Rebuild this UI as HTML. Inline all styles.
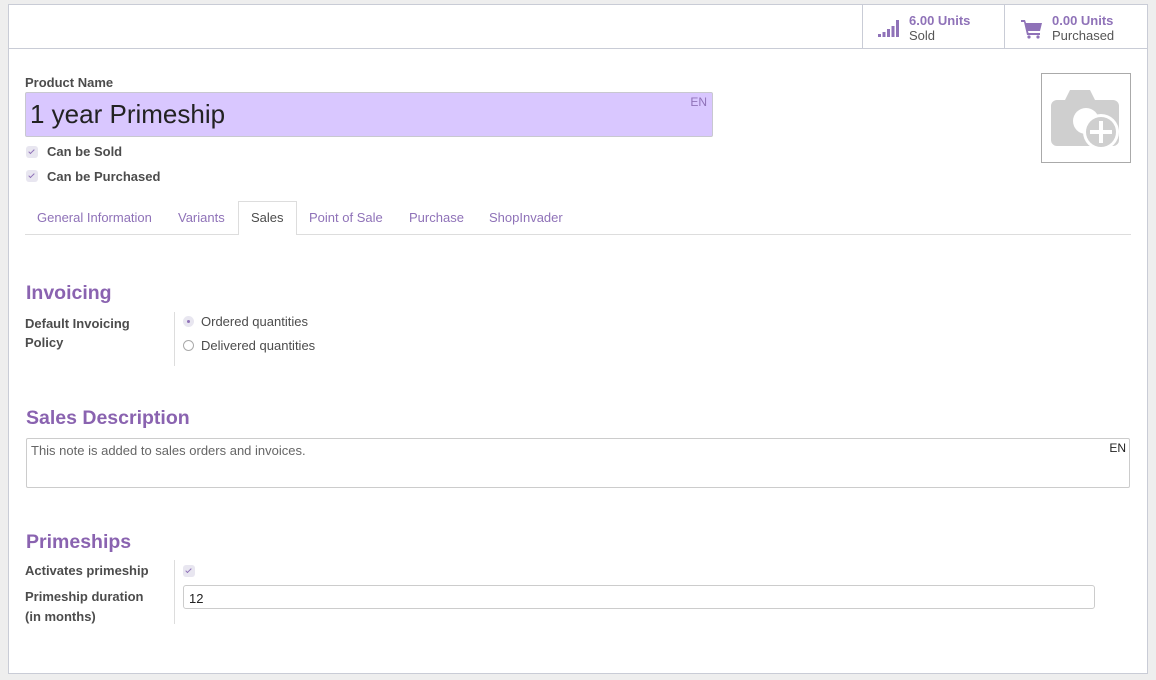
<!DOCTYPE html>
<html><head><style>
*{box-sizing:border-box;margin:0;padding:0}
body{width:1156px;height:680px;background:#eeeeee;font-family:"Liberation Sans",sans-serif;font-size:13px;color:#4c4c4c;position:relative;overflow:hidden}
.sheet{position:absolute;left:8px;top:4px;width:1140px;height:670px;background:#fff;border:1px solid #c9ccd6}
.abs{position:absolute}
.c{position:absolute;left:0;top:-1px;width:1138px;height:668px}
.bar{position:absolute;left:0;top:0;width:1138px;height:44px;border-bottom:1px solid #c9ccd6}
.btn{position:absolute;top:0;height:43px;border-left:1px solid #c9ccd6}
.purple{color:#8f72b8}
.lbl{font-weight:bold;color:#4c4c4c}
.chk{position:absolute;width:12px;height:12px;background:#e8e6f0;border-radius:3px}
.chk:after{content:"";position:absolute;left:4px;top:2px;width:2px;height:5px;border:solid #8f72b8;border-width:0 1.3px 1.3px 0;transform:rotate(45deg)}
.tab{position:absolute;color:#8f72b8;font-size:13px}
h2{position:absolute;font-size:19.5px;color:#8a63b0;font-weight:bold}
.vl{position:absolute;width:1px;background:#ddd}
</style></head><body>
<div class="sheet">
 <div class="bar">
  <div class="btn" style="left:853px;width:142px">
   <svg class="abs" style="left:15px;top:15px" width="22" height="18" viewBox="0 0 22 18"><rect x="0" y="14" width="3" height="3" fill="#8f72b8"/><rect x="4.5" y="12" width="3" height="5" fill="#8f72b8"/><rect x="9" y="9" width="3" height="8" fill="#8f72b8"/><rect x="13.5" y="6" width="3" height="11" fill="#8f72b8"/><rect x="18" y="0" width="3" height="17" fill="#8f72b8"/></svg>
   <div class="abs purple" style="left:46px;top:8px;font-weight:bold">6.00 Units</div>
   <div class="abs" style="left:46px;top:23px;color:#555">Sold</div>
  </div>
  <div class="btn" style="left:995px;width:143px">
   <svg class="abs" style="left:16px;top:14px" width="22" height="20" viewBox="0 0 22 20"><path d="M0 1h4l1 3h16l-2 8H7l.5 2H19v2H6L3 3H0z" fill="#8f72b8"/><circle cx="8" cy="18" r="1.6" fill="#8f72b8"/><circle cx="17" cy="18" r="1.6" fill="#8f72b8"/></svg>
   <div class="abs purple" style="left:47px;top:8px;font-weight:bold">0.00 Units</div>
   <div class="abs" style="left:47px;top:23px;color:#555">Purchased</div>
  </div>
 </div>
 <div class="c">
 <div class="abs lbl" style="left:16px;top:71px">Product Name</div>
 <div class="abs" style="left:16px;top:88px;width:688px;height:45px;background:#d9c7ff;border:1px solid #c8c8d0;border-radius:2px">
  <div class="abs" style="left:4px;top:6px;font-size:26px;color:#222">1 year Primeship</div>
  <div class="abs purple" style="right:5px;top:2px;font-size:12px">EN</div>
 </div>
 <div class="chk" style="left:17px;top:142px"></div>
 <div class="abs lbl" style="left:38px;top:140px">Can be Sold</div>
 <div class="chk" style="left:17px;top:166px"></div>
 <div class="abs lbl" style="left:38px;top:165px">Can be Purchased</div>
 <div class="abs" style="left:1032px;top:69px;width:90px;height:90px;border:1px solid #aaa">
  <svg class="abs" style="left:9px;top:16px" width="72" height="64" viewBox="0 0 72 64"><path d="M19 0h20l5 10h18a6 6 0 0 1 6 6v34a6 6 0 0 1-6 6H6a6 6 0 0 1-6-6V16a6 6 0 0 1 6-6h8z" fill="#cfcfcf"/><circle cx="35" cy="31" r="13" fill="#fff"/><circle cx="50" cy="42" r="18" fill="#fff"/><circle cx="50" cy="42" r="15" fill="#cfcfcf"/><rect x="48" y="31" width="4" height="22" fill="#fff"/><rect x="39" y="40" width="22" height="4" fill="#fff"/></svg>
 </div>
 <div class="abs" style="left:16px;top:230px;width:1106px;height:1px;background:#ddd"></div>
 <div class="abs" style="left:229px;top:197px;width:59px;height:34px;background:#fff;border:1px solid #ddd;border-bottom:none"></div>
 <div class="tab" style="left:28px;top:206px">General Information</div>
 <div class="tab" style="left:169px;top:206px">Variants</div>
 <div class="tab" style="left:242px;top:206px;color:#4c4c4c">Sales</div>
 <div class="tab" style="left:300px;top:206px">Point of Sale</div>
 <div class="tab" style="left:400px;top:206px">Purchase</div>
 <div class="tab" style="left:480px;top:206px">ShopInvader</div>
 <h2 style="left:17px;top:278px">Invoicing</h2>
 <div class="abs lbl" style="left:16px;top:310px;line-height:19px">Default Invoicing<br>Policy</div>
 <div class="vl" style="left:165px;top:308px;height:54px"></div>
 <div class="abs" style="left:174px;top:312px;width:11px;height:11px;border-radius:50%;background:#e8e6f0"><div class="abs" style="left:4px;top:4px;width:3px;height:3px;border-radius:50%;background:#8f72b8"></div></div>
 <div class="abs" style="left:192px;top:310px;color:#4c4c4c">Ordered quantities</div>
 <div class="abs" style="left:174px;top:336px;width:11px;height:11px;border-radius:50%;border:1px solid #aaa"></div>
 <div class="abs" style="left:192px;top:334px;color:#4c4c4c">Delivered quantities</div>
 <h2 style="left:17px;top:403px">Sales Description</h2>
 <div class="abs" style="left:17px;top:434px;width:1104px;height:50px;border:1px solid #ccc;border-radius:2px">
  <div class="abs" style="left:4px;top:4px;color:#666">This note is added to sales orders and invoices.</div>
  <div class="abs" style="right:3px;top:2px;font-size:12px;color:#222">EN</div>
 </div>
 <h2 style="left:17px;top:527px">Primeships</h2>
 <div class="abs lbl" style="left:16px;top:559px">Activates primeship</div>
 <div class="abs lbl" style="left:16px;top:583px;line-height:20px">Primeship duration<br>(in months)</div>
 <div class="vl" style="left:165px;top:556px;height:64px"></div>
 <div class="chk" style="left:174px;top:561px"></div>
 <div class="abs" style="left:174px;top:581px;width:912px;height:24px;border:1px solid #ccc;border-radius:3px"><div class="abs" style="left:5px;top:5px;color:#222">12</div></div>
 </div>
</div>
</body></html>
